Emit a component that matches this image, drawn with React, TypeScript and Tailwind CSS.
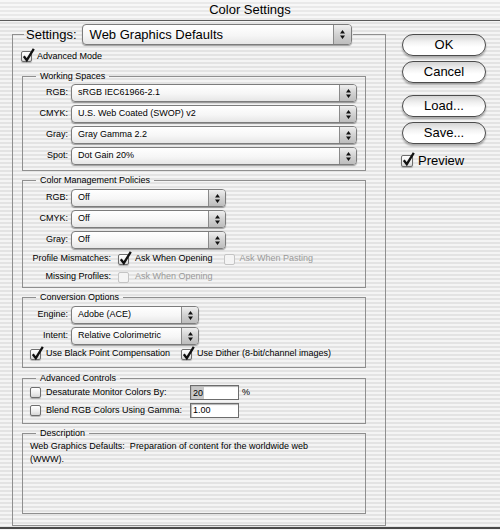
import React from "react";

const stripes =
  "bg-[repeating-linear-gradient(to_bottom,#f4f4f4_0px,#f4f4f4_2px,#e3e3e3_2px,#e3e3e3_4px)]";

function Arrows() {
  return (
    <svg width="5" height="9" viewBox="0 0 5 9">
      <path d="M2.5 0L5 3.5H0Z M0 5.5H5L2.5 9Z" fill="#111" />
    </svg>
  );
}

function Popup({ value, w, big }: { value: string; w: string; big?: boolean }) {
  return (
    <div
      className={`flex shrink-0 rounded-[4px] border border-[#7c7c7c] bg-[linear-gradient(to_bottom,#ffffff_0%,#f6f6f6_55%,#e6e6e6_100%)] shadow-[0_1px_1px_rgba(0,0,0,0.35)] ${w} ${
        big ? "h-[21px]" : "h-[18px]"
      }`}
    >
      <div
        className={`flex flex-1 items-center overflow-hidden whitespace-nowrap ${
          big ? "pl-[7px] text-[13px]" : "pl-[6px] text-[9px]"
        }`}
      >
        {value}
      </div>
      <div
        className={`flex items-center justify-center rounded-r-[3px] border-l border-[#8a8a8a] bg-[linear-gradient(to_bottom,#efefef_0%,#d2d2d2_50%,#bdbdbd_100%)] ${
          big ? "w-[18px]" : "w-[17px]"
        }`}
      >
        <Arrows />
      </div>
    </div>
  );
}

function Check({ on, disabled, size }: { on?: boolean; disabled?: boolean; size?: string }) {
  return (
    <div
      className={`relative shrink-0 rounded-[2px] border ${size ?? "h-[11px] w-[11px]"} ${
        disabled
          ? "border-[#c4c4c4] bg-[#f4f4f4]"
          : "border-[#6e6e6e] bg-[linear-gradient(to_bottom,#ffffff_0%,#ececec_60%,#d6d6d6_100%)] shadow-[0_1px_1px_rgba(0,0,0,0.25)]"
      }`}
    >
      {on && (
        <svg
          className="absolute left-[0px] top-[-4px] overflow-visible"
          width="13"
          height="14"
          viewBox="0 0 13 14"
        >
          <path
            d="M1.8 8.2 L4.8 12.2 L11.8 0.8"
            fill="none"
            stroke="#111"
            strokeWidth="2.3"
            strokeLinejoin="miter"
          />
        </svg>
      )}
    </div>
  );
}

function Group({
  title,
  h,
  children,
  mt,
}: {
  title: string;
  h: string;
  mt: string;
  children: React.ReactNode;
}) {
  return (
    <fieldset className={`ml-[1px] w-[344px] border border-[#8f8f8f] ${h} ${mt}`}>
      <legend className="ml-[13px] px-[4px] text-[9px] leading-[11px]">{title}</legend>
      {children}
    </fieldset>
  );
}

function PopRow({ label, value, w }: { label: string; value: string; w: string }) {
  return (
    <div className="flex items-center">
      <div className="w-[45px] text-right text-[9px]">{label}</div>
      <div className="ml-[3px]">
        <Popup value={value} w={w} />
      </div>
    </div>
  );
}

function Button({ label }: { label: string }) {
  return (
    <div className="flex h-[22px] w-[84px] items-center justify-center rounded-full border border-[#4c4c4c] bg-[linear-gradient(to_bottom,#d4d4d4_0%,#f2f2f2_35%,#ffffff_60%,#ffffff_100%)] text-[13px] shadow-[0_2px_2px_rgba(0,0,0,0.3),inset_0_-2px_2px_rgba(255,255,255,0.9)]">
      {label}
    </div>
  );
}

export default function App() {
  return (
    <div
      className={`flex h-[530px] w-[500px] flex-col overflow-hidden font-['Liberation_Sans',Arial,sans-serif] text-black ${stripes}`}
    >
      <div className="flex h-[21px] shrink-0 items-center justify-center border-b border-[#5a5a5a] bg-[repeating-linear-gradient(to_bottom,#f7f7f7_0px,#f7f7f7_2px,#e9e9e9_2px,#e9e9e9_4px)] text-[13px]">
        Color Settings
      </div>
      <div className="flex h-[506px] shrink-0">
        <fieldset className="ml-[12px] mt-[3px] h-[502px] w-[374px] border border-[#8f8f8f] pl-[8px] pr-[19px]">
          <legend className="ml-[3px] pl-[2px] pr-[1px]">
            <div className="flex items-center">
              <span className="text-[13px]">Settings:</span>
              <div className="ml-[5px]">
                <Popup value="Web Graphics Defaults" w="w-[270px]" big />
              </div>
            </div>
          </legend>

          <div className="mt-[6px] flex h-[11px] items-center">
            <Check on />
            <span className="ml-[5px] text-[9px]">Advanced Mode</span>
          </div>

          <Group title="Working Spaces" h="h-[100px]" mt="mt-[9px]">
            <div className="flex flex-col gap-[3px] pt-[2px]">
              <PopRow label="RGB:" value="sRGB IEC61966-2.1" w="w-[286px]" />
              <PopRow label="CMYK:" value="U.S. Web Coated (SWOP) v2" w="w-[286px]" />
              <PopRow label="Gray:" value="Gray Gamma 2.2" w="w-[286px]" />
              <PopRow label="Spot:" value="Dot Gain 20%" w="w-[286px]" />
            </div>
          </Group>

          <Group title="Color Management Policies" h="h-[113px]" mt="mt-[4px]">
            <div className="flex flex-col gap-[3px] pt-[3px]">
              <PopRow label="RGB:" value="Off" w="w-[155px]" />
              <PopRow label="CMYK:" value="Off" w="w-[155px]" />
              <PopRow label="Gray:" value="Off" w="w-[155px]" />
            </div>
            <div className="mt-[4px] flex h-[12px] items-center text-[9px]">
              <div className="w-[88px] text-right">Profile Mismatches:</div>
              <div className="ml-[7px]">
                <Check on />
              </div>
              <span className="ml-[6px]">Ask When Opening</span>
              <div className="ml-[11px]">
                <Check disabled />
              </div>
              <span className="ml-[5px] text-[#9a9a9a]">Ask When Pasting</span>
            </div>
            <div className="mt-[6px] flex h-[12px] items-center text-[9px]">
              <div className="w-[88px] text-right">Missing Profiles:</div>
              <div className="ml-[7px]">
                <Check disabled />
              </div>
              <span className="ml-[6px] text-[#9a9a9a]">Ask When Opening</span>
            </div>
          </Group>

          <Group title="Conversion Options" h="h-[76px]" mt="mt-[4px]">
            <div className="flex flex-col gap-[3px] pt-[3px]">
              <PopRow label="Engine:" value="Adobe (ACE)" w="w-[128px]" />
              <PopRow label="Intent:" value="Relative Colorimetric" w="w-[128px]" />
            </div>
            <div className="mt-[3px] flex h-[12px] items-center pl-[7px] text-[9px]">
              <Check on />
              <span className="ml-[5px]">Use Black Point Compensation</span>
              <div className="ml-[11px]">
                <Check on />
              </div>
              <span className="ml-[5px]">Use Dither (8-bit/channel images)</span>
            </div>
          </Group>

          <Group title="Advanced Controls" h="h-[51px]" mt="mt-[5px]">
            <div className="flex flex-col gap-[3px] pl-[7px] pt-[1px] text-[9px]">
              <div className="flex h-[15px] items-center">
                <Check />
                <span className="ml-[5px] w-[144px]">Desaturate Monitor Colors By:</span>
                <div className="flex h-[15px] w-[49px] items-center border border-[#6c6c6c] bg-white pl-[1px] shadow-[inset_1px_1px_1px_rgba(0,0,0,0.3)]">
                  <span className="bg-[#c8c8c8] px-[1px] leading-[12px]">20</span>
                </div>
                <span className="ml-[3px]">%</span>
              </div>
              <div className="flex h-[15px] items-center">
                <Check />
                <span className="ml-[5px] w-[144px]">Blend RGB Colors Using Gamma:</span>
                <div className="flex h-[15px] w-[49px] items-center border border-[#6c6c6c] bg-white pl-[2px] shadow-[inset_1px_1px_1px_rgba(0,0,0,0.3)]">
                  1.00
                </div>
              </div>
            </div>
          </Group>

          <Group title="Description" h="h-[86px]" mt="mt-[4px]">
            <div className="pl-[7px] pt-[1px] text-[9px] leading-[13px]">
              Web Graphics Defaults:&nbsp; Preparation of content for the worldwide web
              <br />
              (WWW).
            </div>
          </Group>
        </fieldset>

        <div className="ml-[16px] mt-[13px] flex flex-col">
          <Button label="OK" />
          <div className="mt-[5px]">
            <Button label="Cancel" />
          </div>
          <div className="mt-[12px]">
            <Button label="Load..." />
          </div>
          <div className="mt-[5px]">
            <Button label="Save..." />
          </div>
          <div className="-ml-[1px] mt-[11px] flex h-[12px] items-center">
            <Check on size="h-[12px] w-[12px]" />
            <span className="ml-[5px] text-[13px]">Preview</span>
          </div>
        </div>
      </div>
      <div className="h-[2px] shrink-0 bg-[#4a4a4a]" />
    </div>
  );
}
